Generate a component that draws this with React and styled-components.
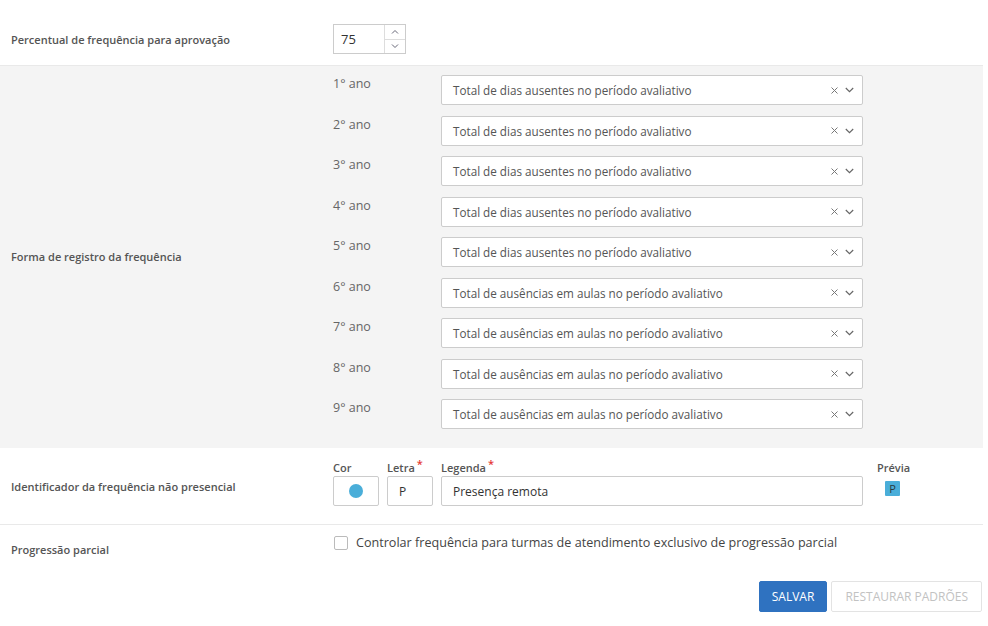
import React from 'react'
import styled, { createGlobalStyle } from 'styled-components'

const GlobalStyle = createGlobalStyle`
    body {
        margin: 0;
        background: #fff;
        font-family: "Open Sans", "DejaVu Sans", sans-serif;
        color: #555;
    }
`

const Page = styled.div`
    width: 983px;
`

const Row = styled.div`
    display: grid;
    grid-template-columns: 322px 1fr;
    padding-left: 11px;
    align-items: center;
    height: ${props => props.height ? props.height + 'px' : 'auto'};
    padding-top: ${props => props.top || 0}px;
    background: ${props => props.gray ? '#f4f4f4' : '#fff'};
    border-top: ${props => props.border ? '1px solid #e9e9e9' : 'none'};
    box-sizing: border-box;
`

const Label = styled.div`
    font-size: 11px;
    font-weight: 600;
    color: #555;
    margin-top: ${props => props.offset || 0}px;
`

const NumberBox = styled.div`
    display: flex;
    width: 73px;
    height: 30px;
    border: 1px solid #ccc;
    box-sizing: border-box;
    background: #fff;
`

const NumberValue = styled.div`
    flex: 1;
    font-size: 13px;
    color: #333;
    padding-left: 7px;
    line-height: 28px;
`

const Spinner = styled.div`
    width: 20px;
    display: flex;
    flex-direction: column;
    border-left: 1px solid #ddd;
`

const SpinButton = styled.div`
    flex: 1;
    display: flex;
    align-items: center;
    justify-content: center;
    border-top: ${props => props.bottom ? '1px solid #ddd' : 'none'};
`

const YearList = styled.div`
    display: flex;
    flex-direction: column;
    gap: 10.5px;
    padding: 9px 0 19px;
`

const YearRow = styled.div`
    display: grid;
    grid-template-columns: 108px 422px;
    align-items: start;
`

const YearLabel = styled.div`
    font-size: 12.5px;
    color: #666;
    line-height: 17px;
`

const SelectBox = styled.div`
    height: 30px;
    border: 1px solid #ccc;
    border-radius: 2px;
    background: #fff;
    box-sizing: border-box;
    display: flex;
    align-items: center;
    padding: 0 8px 0 11px;
    font-size: 11.7px;
    color: #555;
`

const SelectText = styled.div`
    flex: 1;
`

const SelectIcons = styled.div`
    display: flex;
    align-items: center;
    gap: 7px;
`

const FieldGroup = styled.div`
    display: flex;
    align-items: flex-start;
    align-self: start;
`

const Field = styled.div`
    display: flex;
    flex-direction: column;
    margin-right: ${props => props.gap || 0}px;
`

const FieldLabel = styled.div`
    font-size: 11px;
    font-weight: 600;
    color: #555;
    height: 17px;
    line-height: 17px;
    text-align: ${props => props.center ? 'center' : 'left'};
`

const Required = styled.span`
    color: #e53935;
    position: relative;
    top: -4px;
    margin-left: 2px;
    font-size: 11px;
`

const InputBox = styled.div`
    width: ${props => props.width}px;
    height: 30px;
    border: 1px solid #ccc;
    border-radius: 2px;
    box-sizing: border-box;
    display: flex;
    align-items: center;
    justify-content: ${props => props.center ? 'center' : 'flex-start'};
    padding-left: ${props => props.center ? 0 : 11}px;
    font-size: 12px;
    color: #333;
`

const Dot = styled.div`
    width: 14px;
    height: 14px;
    border-radius: 50%;
    background: #4aaed9;
`

const Badge = styled.div`
    width: 15px;
    height: 15px;
    margin: 5px 0 0 8px;
    background: #4aaed9;
    color: #2a3a40;
    font-size: 11px;
    line-height: 15px;
    text-align: center;
    border-radius: 1px;
`

const CheckRow = styled.label`
    display: flex;
    align-items: center;
    gap: 8px;
    align-self: start;
    margin-top: 9px;
    font-size: 12.6px;
    color: #444;
`

const CheckBox = styled.span`
    width: 14px;
    height: 14px;
    border: 1px solid #bbb;
    border-radius: 2px;
    box-sizing: border-box;
    margin-left: 1px;
    background: #fff;
`

const Footer = styled.div`
    display: flex;
    justify-content: flex-end;
    gap: 4px;
    padding: 9px 1px 0 0;
`

const Button = styled.button`
    height: 31px;
    padding: 0 ${props => props.primary ? 12 : 13}px;
    border: 1px solid ${props => props.primary ? '#2f72c0' : '#e3e3e3'};
    background: ${props => props.primary ? '#2f72c0' : '#fff'};
    color: ${props => props.primary ? '#fff' : '#c2c2c2'};
    font-family: "Open Sans", sans-serif;
    font-size: 12px;
    border-radius: 2px;
    cursor: pointer;
`

const Chevron = ({ up }) => (
    <svg width="8" height="5" viewBox="0 0 8 5">
        <path d={up ? 'M1 4.5 L4 1.5 L7 4.5' : 'M1 0.5 L4 3.5 L7 0.5'} fill="none" stroke="#667" strokeWidth="1" />
    </svg>
)

const ClearIcon = () => (
    <svg width="7" height="7" viewBox="0 0 7 7">
        <path d="M0.5 0.5 L6.5 6.5 M6.5 0.5 L0.5 6.5" stroke="#777" strokeWidth="1" />
    </svg>
)

const DropIcon = () => (
    <svg width="9" height="6" viewBox="0 0 9 6">
        <path d="M0.8 1 L4.5 4.6 L8.2 1" fill="none" stroke="#666" strokeWidth="1.2" />
    </svg>
)

const years = [
    'Total de dias ausentes no período avaliativo',
    'Total de dias ausentes no período avaliativo',
    'Total de dias ausentes no período avaliativo',
    'Total de dias ausentes no período avaliativo',
    'Total de dias ausentes no período avaliativo',
    'Total de ausências em aulas no período avaliativo',
    'Total de ausências em aulas no período avaliativo',
    'Total de ausências em aulas no período avaliativo',
    'Total de ausências em aulas no período avaliativo',
]

export default function App() {
    return (
        <Page>
            <GlobalStyle />
            <Row height={65} top={13}>
                <Label>Percentual de frequência para aprovação</Label>
                <NumberBox>
                    <NumberValue>75</NumberValue>
                    <Spinner>
                        <SpinButton><Chevron up /></SpinButton>
                        <SpinButton bottom><Chevron /></SpinButton>
                    </Spinner>
                </NumberBox>
            </Row>
            <Row gray border>
                <Label offset={-2}>Forma de registro da frequência</Label>
                <YearList>
                    {years.map((text, i) => (
                        <YearRow key={i}>
                            <YearLabel>{i + 1}° ano</YearLabel>
                            <SelectBox>
                                <SelectText>{text}</SelectText>
                                <SelectIcons>
                                    <ClearIcon />
                                    <DropIcon />
                                </SelectIcons>
                            </SelectBox>
                        </YearRow>
                    ))}
                </YearList>
            </Row>
            <Row height={76} top={11}>
                <Label offset={-10}>Identificador da frequência não presencial</Label>
                <FieldGroup>
                    <Field gap={8}>
                        <FieldLabel>Cor</FieldLabel>
                        <InputBox width={46} center><Dot /></InputBox>
                    </Field>
                    <Field gap={8}>
                        <FieldLabel>Letra<Required>*</Required></FieldLabel>
                        <InputBox width={46}>P</InputBox>
                    </Field>
                    <Field gap={14}>
                        <FieldLabel>Legenda<Required>*</Required></FieldLabel>
                        <InputBox width={422}>Presença remota</InputBox>
                    </Field>
                    <Field>
                        <FieldLabel>Prévia</FieldLabel>
                        <Badge>P</Badge>
                    </Field>
                </FieldGroup>
            </Row>
            <Row height={48} border>
                <Label offset={1}>Progressão parcial</Label>
                <CheckRow>
                    <CheckBox />
                    Controlar frequência para turmas de atendimento exclusivo de progressão parcial
                </CheckRow>
            </Row>
            <Footer>
                <Button primary>SALVAR</Button>
                <Button>RESTAURAR PADRÕES</Button>
            </Footer>
        </Page>
    )
}
